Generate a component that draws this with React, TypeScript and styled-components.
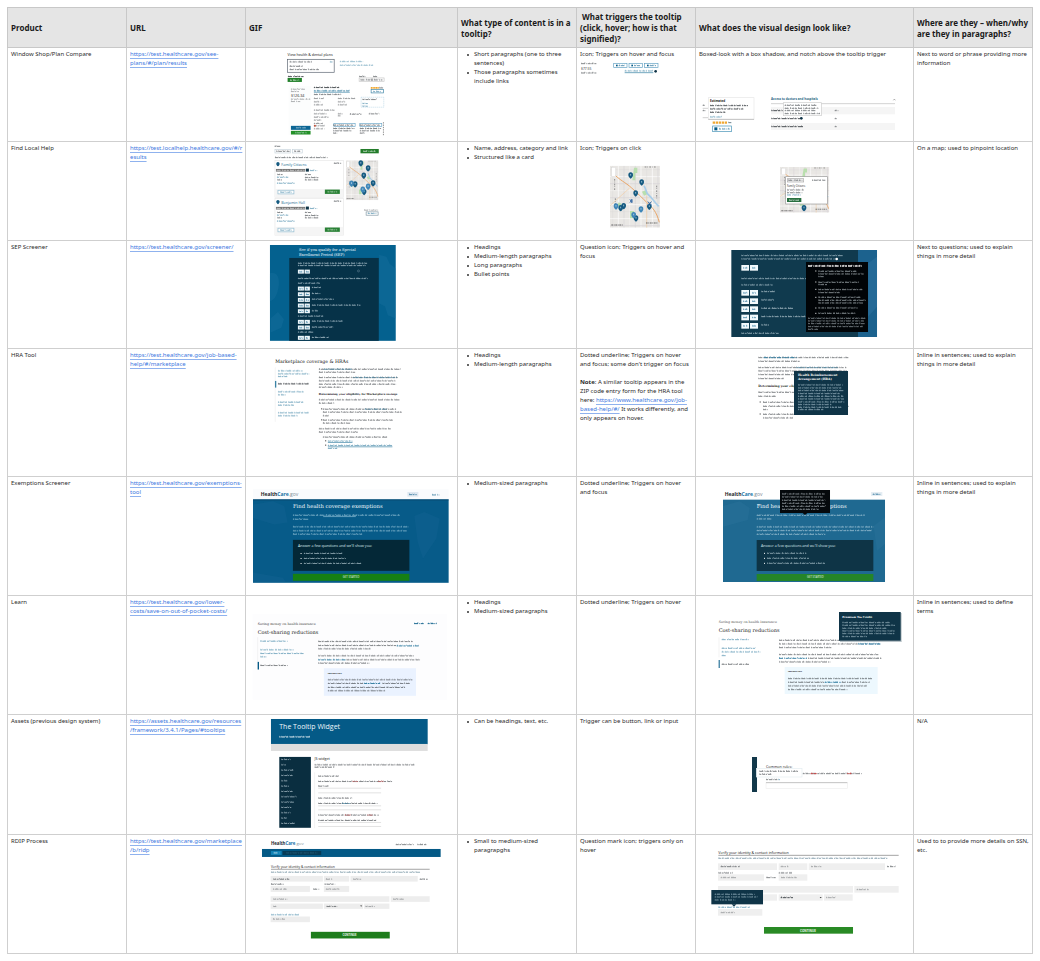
import React from "react";
import styled, { createGlobalStyle } from "styled-components";

const GlobalStyle = createGlobalStyle`
  body {
    margin: 0;
    background: #fff;
    color: #2b2b2b;
    font-family: "Noto Sans", "Open Sans", sans-serif;
  }
`;

const Page = styled.main`
  padding: 7px;
`;

const Table = styled.table`
  width: 100%;
  table-layout: fixed;
  border-collapse: collapse;
  font-size: 6px;
  line-height: 9px;
`;

const Col = styled.col<{ $share: number }>`
  width: ${(p) => p.$share}%;
`;

const HeadCell = styled.th`
  height: 39px;
  padding: 0 2px 0 3px;
  border: 1px solid #c8c8c8;
  background: #e5e5e5;
  color: #1a1a1a;
  font-size: 8px;
  line-height: 11px;
  font-weight: 700;
  text-align: left;
  vertical-align: middle;
`;

const Row = styled.tr<{ $height: number }>`
  height: ${(p) => p.$height}px;
`;

const Cell = styled.td`
  padding: 0;
  border: 1px solid #cfcfcf;
  vertical-align: top;
`;

const Copy = styled.p<{ $spaced?: boolean }>`
  margin: ${(p) => (p.$spaced ? "5px 0 0" : "0")};
  padding: 2px 2px 2px 3px;
`;

const Bullets = styled.ul`
  margin: 0;
  padding: 2px 3px 0 9px;
  list-style: none;
`;

const Bullet = styled.li`
  display: flex;
  gap: 5px;

  &::before {
    content: "";
    flex: none;
    width: 2px;
    height: 2px;
    margin-top: 4px;
    border-radius: 50%;
    background: #333;
  }
`;

const Link = styled.a`
  color: #3c78e0;
  text-decoration: underline;
  text-decoration-color: #8fb2ee;
  text-underline-offset: 2px;
  overflow-wrap: anywhere;
`;

const Drawing = styled.svg`
  display: block;
  width: 100%;
  height: auto;
`;

const Label = styled.text<{ $size: number; $serif?: boolean; $bold?: boolean }>`
  font-family: ${(p) => (p.$serif ? '"DejaVu Serif", serif' : '"Open Sans", sans-serif')};
  font-size: ${(p) => p.$size}px;
  font-weight: ${(p) => (p.$bold ? 700 : 400)};
`;

const NAVY = "#0f3447";
const BLUE = "#045a87";
const GREEN = "#23812b";
const INK = "#3a3f44";
const TEAL = "#3b83a5";
const PALE = "#d6e6ee";

const PATTERNS = ["9 2 5 3 13 3 4 2 7 4", "4 2 11 3 7 4 15 3", "12 4 3 2 8 2 6 3", "6 3 9 2 3 3 14 4"];
const STEMS = ["1 5 1 9 2 6", "2 8 1 4 1 11", "1 7 2 3 1 10", "1 4 1 12 2 7"];

type LineProps = { x: number; y: number; w: number; c?: string; t?: number; o?: number };

/* A run of words too small to read. */
function Words({ x, y, w, c = INK, t = 3, o = 0.62 }: LineProps) {
  return (
    <g stroke={c} opacity={o} fill="none">
      <path d={`M${x} ${y}h${w}`} strokeWidth={t} strokeDasharray={PATTERNS[(x + y) % 4]} />
      <path d={`M${x + 1} ${y - 2}h${w - 2}`} strokeWidth={3} strokeDasharray={STEMS[(x + w) % 4]} />
    </g>
  );
}

function Lines({ x, c, t, o, rows }: { x: number; c?: string; t?: number; o?: number; rows: [number, number][] }) {
  return (
    <>
      {rows.map(([y, w]) => (
        <Words key={y} x={x} y={y} w={w} c={c} t={t} o={o} />
      ))}
    </>
  );
}

type BoxProps = { x: number; y: number; w: number; h: number; f?: string; s?: string };

function Box({ x, y, w, h, f = "#fff", s = "none" }: BoxProps) {
  return <rect x={x} y={y} width={w} height={h} fill={f} stroke={s} strokeWidth={2} />;
}

function Rule({ x, y, w, c = "#bbb" }: { x: number; y: number; w: number; c?: string }) {
  return <path d={`M${x} ${y}h${w}`} stroke={c} strokeWidth={2} />;
}

function Pin({ x, y, light }: { x: number; y: number; light?: boolean }) {
  return (
    <g>
      <path
        d={`M${x} ${y + 10}C${x - 4} ${y + 7} ${x - 7} ${y + 4} ${x - 7} ${y - 1}A7 8 0 0 1 ${x + 7} ${y - 1}C${x + 7} ${y + 4} ${x + 4} ${y + 7} ${x} ${y + 10}Z`}
        fill={light ? "#3f86b8" : "#155a80"}
      />
      <path d={`M${x} ${y - 4}v5`} stroke="#cfe4f0" strokeWidth={2} />
    </g>
  );
}

function MapArt({ x, y, w, h }: { x: number; y: number; w: number; h: number }) {
  const streets = Array.from({ length: 9 }, (_, i) => i);
  return (
    <svg x={x} y={y} width={w} height={h} viewBox="0 0 150 186" preserveAspectRatio="none">
      <rect width="150" height="186" fill="#e9e7e4" />
      {streets.map((i) => (
        <g key={i} stroke={i % 2 ? "#fff" : "#d8d4d8"} strokeWidth={i % 3 ? 2 : 1}>
          <path d={`M${8 + i * 17} 0v186`} />
          <path d={`M0 ${12 + i * 21}h150`} />
        </g>
      ))}
      <path d="M72 6h10v16h-6v22h-9zM60 136h12v22h-12zM26 110l8 4-4 10-8-4zM96 78l10-4 6 12-10 4z" fill="#b9dfae" />
      <path d="M102 60c8 12 4 20 14 28s14 18 30 34" fill="none" stroke="#a9cde8" strokeWidth="5" />
      <path d="M8 22C30 44 46 50 64 66S96 96 112 112 138 134 148 170" fill="none" stroke="#e9a668" strokeWidth="3" />
      <path d="M0 120L60 66M110 186V90" stroke="#f3cfa6" strokeWidth="2" />
      <path d="M14 40v34M16 98v30M140 60v40M104 4h36" stroke="#8d8d8d" strokeWidth="3" strokeDasharray="5 3 2 4" />
      <rect x="5" y="5" width="12" height="27" fill="#fff" stroke="#ccc" />
      <path d="M4 178h36M108 172h34" stroke="#666" strokeWidth="3" strokeDasharray="5 2 3 2" />
    </svg>
  );
}

function Logo({ x, y, size }: { x: number; y: number; size: number }) {
  return (
    <Label x={x} y={y} $size={size} $bold fill="#23282c">
      Health
      <tspan fill="#1571a5">Care</tspan>
      <tspan fill="#7d8c96" fontWeight={400}>.gov</tspan>
    </Label>
  );
}

function YesNo({ x, y }: { x: number; y: number }) {
  return (
    <g>
      <Box x={x} y={y} w={18} h={12} f="#eef6fa" />
      <Box x={x + 20} y={y} w={16} h={12} f="#eef6fa" />
      <Words x={x + 4} y={y + 7} w={11} c={BLUE} />
      <Words x={x + 24} y={y + 7} w={9} c={BLUE} />
    </g>
  );
}

function PlanCompareGif() {
  return (
    <Drawing viewBox="738 144 634 279" aria-hidden="true">
      <Label x={863} y={167} $size={11} fill="#111">View health &amp; dental plans</Label>
      <Box x={863} y={178} w={140} h={39} s="#56606c" />
      <Lines x={869} rows={[[186, 68], [199, 40], [209, 88]]} />
      <Words x={990} y={186} w={8} c={TEAL} />
      <Lines x={1020} c={TEAL} o={0.5} rows={[[185, 70], [196, 100]]} />
      <Words x={864} y={230} w={47} o={0.9} />
      <Box x={863} y={234} w={43} h={12} f={GREEN} />
      <Words x={870} y={241} w={28} c="#fff" />
      <Words x={1078} y={230} w={20} />
      <Words x={1120} y={230} w={16} />
      <Box x={1078} y={234} w={38} h={10} s="#c5c5c5" />
      <Box x={1118} y={234} w={35} h={10} s="#c5c5c5" />
      <Words x={1082} y={240} w={66} />
      <Box x={866} y={258} w={68} h={147} f="#fcfdfd" />
      <Lines x={873} o={0.4} rows={[[268, 42], [275, 24], [298, 58], [305, 28]]} />
      <Label x={873} y={291} $size={11} fill="#222">$126.34</Label>
      <Box x={873} y={378} w={59} h={12} f="#0b6594" />
      <Box x={873} y={393} w={59} h={11} f="#249028" />
      <Words x={888} y={384} w={30} c={PALE} />
      <Words x={886} y={399} w={34} c={PALE} />
      <Words x={942} y={263} w={78} o={0.9} />
      <Words x={942} y={273} w={108} c={TEAL} o={0.9} />
      <Rule x={942} y={277} w={108} c={TEAL} />
      <Words x={942} y={284} w={82} />
      <Lines x={942} o={0.5} rows={[[296, 31], [306, 20], [315, 28], [331, 62], [342, 38], [352, 44], [361, 22], [371, 28], [378, 34], [387, 32]]} />
      <Lines x={1014} o={0.5} rows={[[296, 54], [306, 22], [315, 30], [342, 14], [348, 8]]} />
      <Words x={1050} y={343} w={35} />
      <Words x={1107} y={342} w={32} />
      <path d="M1113 264h24" stroke="#f0a72f" strokeWidth={5} strokeDasharray="4 1" />
      <Words x={1138} y={264} w={14} />
      <Box x={1114} y={269} w={37} h={10} s={TEAL} />
      <Words x={1120} y={275} w={26} c={TEAL} />
      <rect x={1084} y={292} width={68} height={30} fill="none" stroke="#7eb5d5" strokeDasharray="4 2" />
      <Lines x={1088} rows={[[299, 44]]} />
      <Lines x={1088} c={TEAL} rows={[[311, 16], [319, 16]]} />
      <Box x={1002} y={371} w={64} h={9} s="#6aa6c8" />
      <Box x={1080} y={371} w={66} h={9} s="#6aa6c8" />
      <Lines x={1000} rows={[[376, 60], [386, 64], [393, 56], [400, 12]]} />
      <Lines x={1080} rows={[[376, 60], [386, 64], [393, 60], [400, 14]]} />
      <path d="M1151 367v39" stroke="#555" strokeWidth={2} strokeDasharray="4 3" />
      <circle cx={945} cy={378} r={3} fill="#c6513c" />
    </Drawing>
  );
}

function HelpCard({ y, title }: { y: number; title: string }) {
  return (
    <g transform={`translate(0 ${y})`}>
      <Box x={87} y={0} w={206} h={110} s="#e7e7e7" />
      <Box x={88} y={85} w={204} h={25} f="#f5f5f5" />
      <path d="M96 17c-3-2-5-4-5-8a5 5 0 0 1 10 0c0 4-2 6-5 8z" fill="#155a80" />
      <Label x={106} y={15} $size={11} fill="#18678f">{title}</Label>
      <Words x={264} y={8} w={22} />
      <Box x={90} y={25} w={88} h={8} f="#777" />
      <Words x={92} y={30} w={84} c="#e5e5e5" />
      <Words x={192} y={30} w={22} c={TEAL} />
      <Box x={180} y={24} w={9} h={9} f={NAVY} />
      <Lines x={94} rows={[[42, 18], [58, 14]]} />
      <Lines x={93} c={TEAL} rows={[[50, 34], [68, 54]]} />
      <Lines x={177} rows={[[42, 18], [51, 42], [58, 40]]} />
      <Box x={96} y={89} w={48} h={11} s="#8eb9ce" />
      <Words x={103} y={95} w={34} c={TEAL} />
      <Box x={237} y={87} w={45} h={13} f="#288034" />
      <Words x={245} y={94} w={29} c="#e7f5e9" />
    </g>
  );
}

function LocalHelpGif() {
  return (
    <Drawing viewBox="0 6 634 294" aria-hidden="true">
      <Words x={86} y={19} w={17} />
      <Box x={87} y={28} w={47} h={11} s="#c5d2da" />
      <Box x={140} y={28} w={29} h={11} s="#c5d2da" />
      <Words x={91} y={34} w={40} />
      <Words x={145} y={34} w={20} />
      <Words x={87} y={53} w={158} />
      <Box x={344} y={27} w={55} h={13} f="#237c2a" />
      <Words x={352} y={34} w={38} c="#fff" />
      <HelpCard y={62} title="Family Citizens" />
      <HelpCard y={176} title="Benjamin Hall" />
      <MapArt x={300} y={61} w={98} h={120} />
      {[[345, 70], [367, 85], [354, 107], [328, 133], [382, 130], [355, 156]].map(([x, y]) => (
        <Pin key={x} x={x} y={y} />
      ))}
      <Pin x={317} y={131} light />
      <Pin x={367} y={140} light />
      <Pin x={351} y={149} light />
      <Words x={355} y={211} w={42} o={0.4} />
      <Box x={361} y={216} w={36} h={10} s="#8096a2" />
      <Words x={366} y={221} w={27} c={TEAL} />
    </Drawing>
  );
}

function SepGif() {
  return (
    <Drawing viewBox="0 303 634 321" aria-hidden="true">
      <Box x={72} y={315} w={378} h={288} f="#04618f" />
      <path d="M72 400c22-6 30 14 26 40s-12 40-26 44zM400 344l22 6 10 22 18 14v150l-24-10-8-26-18-10zM74 536l22-20 18 22-8 26-32 14z" fill="#1c74a1" opacity="0.35" />
      <Box x={130} y={354} w={269} h={249} f="#063248" />
      <Label x={159} y={334} $size={11} $serif fill="#f2fafd">See if you qualify for a Special</Label>
      <Label x={159} y={347} $size={11} $serif fill="#f2fafd">Enrollment Period (SEP)</Label>
      <Lines x={156} c="#d4e4ec" rows={[[370, 208], [377, 204], [416, 210], [430, 66], [529, 76], [577, 46]]} />
      {[389, 440, 457, 474, 491, 508, 540, 557, 588].map((y) => (
        <YesNo key={y} x={156} y={y} />
      ))}
      <Lines x={198} c="#d4e4ec" rows={[[443, 30], [461, 27], [478, 66], [496, 146], [513, 20], [544, 94], [562, 64], [593, 52]]} />
      <circle cx={338} cy={393} r={3} fill="none" stroke="#9fb7c4" />
    </Drawing>
  );
}

function HraGif() {
  return (
    <Drawing viewBox="0 9 634 381" aria-hidden="true">
      <Label x={88} y={50} $size={14} $serif fill="#111">Marketplace coverage &amp; HRAs</Label>
      <path d="M88 64v164" stroke="#ddd" />
      <Box x={87} y={105} w={4} h={20} f={TEAL} />
      <Lines x={96} c={TEAL} rows={[[75, 74], [84, 94], [92, 28], [138, 78], [147, 26], [169, 76], [178, 48], [201, 92], [210, 60]]} />
      <Words x={96} y={114} w={96} o={0.9} />
      <Lines x={219} rows={[[70, 246], [79, 110], [95, 238], [105, 230], [115, 232], [124, 72]]} />
      <Words x={234} y={70} w={86} c={TEAL} />
      <Words x={322} y={95} w={132} c={TEAL} />
      <Label x={219} y={146} $size={8} $serif $bold fill="#222">Determining your eligibility for Marketplace savings</Label>
      <Lines x={219} rows={[[162, 242], [172, 46], [249, 216], [259, 118]]} />
      <Lines x={231} rows={[[190, 220], [199, 238], [210, 18], [223, 210], [232, 82], [274, 196]]} />
      <Words x={357} y={190} w={70} c={TEAL} />
      <Lines x={246} c={TEAL} rows={[[286, 74], [299, 194], [308, 28]]} />
      <Rule x={246} y={290} w={74} c={TEAL} />
      <Rule x={246} y={303} w={194} c={TEAL} />
      <path d="M226 189h3M226 222h3M238 285h3M238 298h3" stroke="#222" strokeWidth={3} />
    </Drawing>
  );
}

function ExemptionsGif() {
  return (
    <Drawing viewBox="0 393 634 354" aria-hidden="true">
      <Box x={21} y={430} w={588} h={31} f="#fafbfd" />
      <Logo x={44} y={450} size={15} />
      <Box x={485} y={438} w={33} h={14} f="#dfe7f0" />
      <Words x={490} y={446} w={23} c={BLUE} />
      <Words x={559} y={447} w={22} c={BLUE} />
      <Box x={21} y={460} w={588} h={251} f="#075b89" />
      <path d="M21 476l60-10 34 14 10 50-40 6-64-20zM506 510l30-12 46 20-10 60-40 60-16-50zM21 680l90 16 10 15H21z" fill="#256f9f" opacity="0.18" />
      <Rule x={21} y={462} w={588} c="#0a4466" />
      <Label x={141} y={486} $size={16} $serif fill="#f0f9fc">Find health coverage exemptions</Label>
      <Lines x={141} c="#b5d9e8" rows={[[508, 322], [520, 46], [543, 348], [555, 342], [565, 208]]} />
      <Rule x={232} y={512} w={98} c="#93c3d8" />
      <Box x={141} y={582} w={350} h={93} f="#042837" />
      <Label x={156} y={603} $size={11} fill="#dcebf0">Answer a few questions and we'll show you:</Label>
      <Lines x={174} c="#c5d9e0" rows={[[623, 118], [638, 126], [653, 174]]} />
      <path d="M164 623h3M164 638h3M164 653h3" stroke="#fff" strokeWidth={3} />
      <Box x={141} y={684} w={350} h={21} f="#168014" />
      <Label x={291} y={697} $size={8} fill="#e9f7e9">GET STARTED</Label>
    </Drawing>
  );
}

function LearnGif() {
  return (
    <Drawing viewBox="0 6 634 354" aria-hidden="true">
      <Box x={20} y={60} w={584} h={258} f="#fdfdfe" />
      <Label x={35} y={92} $size={10} $serif fill="#444">Saving money on health insurance</Label>
      <Label x={35} y={119} $size={15} $serif fill="#222">Cost-sharing reductions</Label>
      <Words x={505} y={89} w={29} c={BLUE} o={0.9} />
      <Words x={546} y={89} w={28} c={BLUE} o={0.9} />
      <path d="M35 130v96" stroke="#ddd" />
      <Box x={35} y={204} w={4} h={23} f={BLUE} />
      <Lines x={43} c={TEAL} rows={[[142, 82], [168, 100], [179, 130], [189, 20]]} />
      <Words x={43} y={215} w={82} />
      <Lines x={217} rows={[[143, 284], [155, 234], [165, 158], [186, 290], [208, 154]]} />
      <Words x={302} y={198} w={221} />
      <Words x={453} y={156} w={68} c={TEAL} o={1} />
      <Words x={217} y={198} w={82} c={TEAL} o={1} />
      <Box x={234} y={223} w={277} h={83} f="#eaf2ff" />
      <Label x={246} y={240} $size={7} $bold fill="#222">IMPORTANT</Label>
      <Lines x={246} rows={[[258, 254], [269, 106], [281, 232], [291, 172]]} />
      <Words x={410} y={269} w={82} />
      <Words x={355} y={269} w={52} c={TEAL} o={1} />
    </Drawing>
  );
}

function AssetsGif() {
  const menu = [28, 14, 36, 34, 20, 24, 34, 46, 38, 30, 28, 16, 44];
  return (
    <Drawing viewBox="0 363 634 357" aria-hidden="true">
      <Box x={75} y={375} w={471} h={76} f="#045a87" />
      <Box x={75} y={450} w={471} h={21} f="#ddd" />
      <Label x={100} y={406} $size={21} fill="#eef8fc">The Tooltip Widget</Label>
      <Words x={100} y={429} w={92} c="#fff" o={0.9} />
      <Box x={100} y={489} w={95} h={213} f="#0a2e40" />
      {menu.map((w, i) => (
        <Words key={i} x={106} y={497 + i * 16} w={w} c="#cadae2" />
      ))}
      <Label x={206} y={499} $size={11} fill="#222">JS widget</Label>
      <Lines x={206} rows={[[513, 300], [520, 60]]} />
      <path d="M206 535v168" stroke="#ddd" />
      <Lines x={217} rows={[[547, 62], [563, 222], [577, 32], [613, 102], [629, 178], [664, 182], [680, 176]]} />
      <Words x={320} y={563} w={16} c="#c55" />
      <Words x={397} y={563} w={17} c="#c55" />
      <Words x={297} y={664} w={20} c="#c55" />
      <Words x={365} y={664} w={15} c="#c55" />
      <Words x={288} y={629} w={25} c={TEAL} />
      {[583, 597, 636, 648, 686, 698].map((y) => (
        <Rule key={y} x={217} y={y} w={189} c="#d3d3d3" />
      ))}
    </Drawing>
  );
}

/* The name, birth date and address inputs of the identity form. */
function IdentityFields() {
  const grey = "#ededed";
  return (
    <g>
      <Box x={74} y={132} w={157} h={17} f={grey} />
      <Box x={234} y={132} w={76} h={17} f={grey} />
      <Box x={314} y={132} w={202} h={17} f={grey} />
      <Words x={82} y={142} w={50} />
      <Words x={240} y={142} w={21} o={0.4} />
      <Words x={322} y={142} w={24} o={0.4} />
      <Words x={522} y={142} w={24} />
      <Words x={75} y={157} w={38} />
      <Words x={236} y={157} w={32} />
      <Box x={74} y={162} w={118} h={18} f={grey} />
      <Box x={234} y={162} w={76} h={18} f={grey} />
      <Words x={81} y={172} w={41} o={0.4} />
      <Words x={202} y={172} w={18} />
      <Words x={240} y={172} w={42} o={0.4} />
      <Box x={74} y={193} w={357} h={17} f={grey} />
      <Box x={435} y={193} w={117} h={17} f={grey} />
      <Words x={82} y={202} w={42} o={0.4} />
      <Words x={442} y={202} w={32} o={0.4} />
      <Box x={74} y={215} w={157} h={16} f={grey} />
      <Box x={234} y={215} w={118} h={16} f={grey} />
      <Box x={355} y={215} w={76} h={16} f={grey} />
      <Words x={82} y={224} w={9} o={0.4} />
      <Words x={242} y={224} w={32} />
      <path d="M343 221h6l-3 4z" fill="#333" />
      <Words x={359} y={224} w={28} o={0.4} />
      <Words x={75} y={249} w={84} c={TEAL} />
      <Box x={74} y={254} w={118} h={17} f={grey} />
      <Words x={81} y={262} w={36} o={0.4} />
    </g>
  );
}

function RidpGif() {
  return (
    <Drawing viewBox="0 9 634 354" aria-hidden="true">
      <Logo x={75} y={40} size={13} />
      <Words x={450} y={38} w={54} />
      <Words x={515} y={38} w={31} />
      <Box x={48} y={51} w={537} h={24} f="#045985" />
      <Box x={75} y={57} w={32} h={12} f="#1182b5" />
      <Words x={83} y={63} w={17} c="#fff" />
      <Box x={110} y={57} w={116} h={12} f="#073b56" />
      <Words x={121} y={63} w={94} c="#35718c" o={0.5} />
      <Label x={75} y={109} $size={10} fill="#222">Verify your identity &amp; contact information</Label>
      <Rule x={75} y={112} w={477} c="#777" />
      <Words x={75} y={121} w={448} c="#577c90" />
      <IdentityFields />
      <Box x={195} y={300} w={237} h={20} f="#1e7d1c" />
      <Label x={290} y={313} $size={8} $bold fill="#eef8ee">CONTINUE</Label>
    </Drawing>
  );
}

function PlanCompareTrigger() {
  return (
    <Drawing viewBox="0 182 354 40" aria-hidden="true">
      <Words x={12} y={190} w={46} />
      <Label x={12} y={208} $size={10} fill="#222">$77.55</Label>
      <Words x={12} y={218} w={46} />
      {[110, 156, 203].map((x) => (
        <g key={x}>
          <Box x={x} y={189} w={40} h={13} s="#5f9fc2" />
          <Box x={x + 7} y={193} w={5} h={5} f={BLUE} />
          <Words x={x + 15} y={196} w={20} c={BLUE} />
        </g>
      ))}
      <Words x={143} y={212} w={86} c={TEAL} />
      <Rule x={143} y={217} w={86} c="#2d7ba0" />
      <circle cx={236} cy={213} r={4} fill={NAVY} />
    </Drawing>
  );
}

function LocalHelpTrigger() {
  return (
    <Drawing viewBox="0 46 354 220" aria-hidden="true">
      <MapArt x={99} y={78} w={150} h={186} />
      {[[161, 107], [194, 128], [176, 161], [131, 205], [140, 199], [217, 201], [177, 236]].map(([x, y]) => (
        <Pin key={x} x={x} y={y} />
      ))}
      <Pin x={117} y={200} light />
      <Pin x={192} y={209} light />
      <Pin x={170} y={226} light />
      <path d="M158 180l10 8M168 180l-10 8M163 178v12M212 186l12 10M224 186l-12 10" stroke="#3d6ea8" strokeWidth={3} />
    </Drawing>
  );
}

function PlanCompareVisual() {
  return (
    <Drawing viewBox="0 182 651 240" aria-hidden="true">
      <Lines x={20} rows={[[315, 8], [331, 10]]} />
      <Rule x={20} y={324} w={16} />
      <Rule x={20} y={352} w={16} />
      <Box x={37} y={292} w={137} h={65} s="#e6e6e6" />
      <Rule x={37} y={357} w={137} c="#aaa" />
      <Label x={42} y={306} $size={9} $bold fill="#222">Estimated</Label>
      <Lines x={42} o={0.85} rows={[[316, 114], [326, 104], [336, 46]]} />
      <Words x={42} y={350} w={36} c={TEAL} />
      <path d="M50 367h44" stroke="#efa833" strokeWidth={7} strokeDasharray="7 2" />
      <Words x={97} y={367} w={9} c={NAVY} />
      <Box x={50} y={377} w={56} h={17} s="#3f8fb5" />
      <Box x={55} y={381} w={9} h={9} f={BLUE} />
      <Words x={69} y={386} w={32} c={BLUE} />
      <Label x={225} y={300} $size={9} $bold fill="#2a6685">Access to doctors and hospitals</Label>
      <path d="M592 300l3-4 3 4" stroke="#333" fill="none" />
      <Rule x={225} y={310} w={372} c="#bcbcbc" />
      <Box x={225} y={320} w={372} h={22} f="#f5f5f5" />
      <Box x={225} y={368} w={372} h={21} f="#f5f5f5" />
      <Words x={226} y={331} w={34} o={0.9} />
      <Words x={226} y={355} w={86} o={0.9} />
      <circle cx={316} cy={354} r={4} fill={NAVY} />
      <Words x={226} y={379} w={98} o={0.9} />
      <Lines x={416} rows={[[331, 11], [355, 8], [379, 8]]} />
      <Box x={262} y={307} w={114} h={39} s="#ccc" />
      <Lines x={266} rows={[[315, 98], [324, 102], [331, 92], [340, 106]]} />
    </Drawing>
  );
}

function LocalHelpVisual() {
  return (
    <Drawing viewBox="0 6 651 290" aria-hidden="true">
      <MapArt x={252} y={81} w={148} h={137} />
      <Pin x={324} y={204} />
      <Box x={269} y={110} w={125} h={82} s="#999" />
      <Box x={274} y={116} w={49} h={10} f="#f3f3f3" s="#aaa" />
      <Words x={277} y={121} w={42} />
      <Words x={348} y={121} w={40} />
      <Label x={273} y={141} $size={8} fill="#222">Family Citizens</Label>
      <Lines x={273} rows={[[150, 50], [158, 46]]} />
      <Words x={273} y={165} w={42} c={TEAL} />
      <Box x={273} y={174} w={43} h={12} f="#286f40" />
      <Words x={279} y={181} w={30} c="#fff" />
    </Drawing>
  );
}

function SepVisual() {
  return (
    <Drawing viewBox="0 303 651 321" aria-hidden="true">
      <Box x={106} y={330} w={437} h={261} f="#103a4e" />
      <Box x={486} y={330} w={57} h={261} f="#1c628e" />
      <path d="M516 370l27-20v150l-27 30z" fill="#3a7dac" opacity="0.3" />
      <Lines x={136} c="#c9dce5" rows={[[347, 304], [357, 280], [416, 194], [435, 94], [580, 112]]} />
      <circle cx={422} cy={357} r={4} fill="#fff" />
      {[375, 450, 475, 499, 524, 549].map((y) => (
        <g key={y}>
          <Box x={136} y={y} w={23} h={17} f="#f3fafd" />
          <Box x={162} y={y} w={24} h={17} f="#f3fafd" />
          <Words x={141} y={y + 9} w={13} c={BLUE} />
          <Words x={168} y={y + 9} w={12} c={BLUE} />
        </g>
      ))}
      <Lines x={196} c="#dce9ef" rows={[[455, 42], [480, 38], [505, 98], [530, 134], [555, 26]]} />
      <Box x={330} y={366} w={186} h={210} f="#010407" />
      <Words x={336} y={378} w={162} c="#fff" t={4} o={0.9} />
      <Lines x={367} c="#c5cfd4" rows={[[394, 114], [402, 136], [410, 16], [427, 122], [434, 26], [449, 132], [458, 64], [472, 126], [481, 142], [489, 134], [504, 118], [520, 112]]} />
      <Lines x={336} c="#aeb9bf" rows={[[535, 172], [543, 168], [551, 170], [560, 164], [568, 30]]} />
      <path d="M358 393h3M358 426h3M358 448h3M358 472h3M358 504h3M358 520h3" stroke="#fff" strokeWidth={3} />
    </Drawing>
  );
}

function HraVisual() {
  return (
    <Drawing viewBox="0 9 651 381" aria-hidden="true">
      <Lines x={187} rows={[[35, 272], [46, 124], [65, 264], [75, 266], [86, 108], [98, 80], [139, 130], [151, 52]]} />
      <Words x={203} y={35} w={100} c={TEAL} o={1} />
      <Words x={300} y={65} w={128} c={TEAL} />
      <Label x={187} y={122} $size={9} $serif $bold fill="#222">Determining your eligibility</Label>
      <Lines x={201} rows={[[169, 92], [181, 258], [191, 14], [205, 242], [216, 90]]} />
      <path d="M191 168h3M191 204h3" stroke="#222" strokeWidth={3} />
      <Box x={294} y={75} w={162} h={132} f={NAVY} />
      <Label x={306} y={90} $size={9} $serif $bold fill="#fff">Health Reimbursement</Label>
      <Label x={306} y={102} $size={9} $serif $bold fill="#fff">Arrangement (HRA)</Label>
      <Lines x={306} c="#b9d0db" rows={[[117, 134], [126, 130], [134, 138], [143, 126], [151, 136], [159, 138], [168, 140], [176, 102], [184, 130], [191, 76]]} />
    </Drawing>
  );
}

function ExemptionsVisual() {
  return (
    <Drawing viewBox="0 393 651 354" aria-hidden="true">
      <Logo x={86} y={449} size={15} />
      <Box x={525} y={438} w={34} h={12} f="#e5edf3" />
      <Words x={530} y={445} w={24} c={BLUE} />
      <Box x={81} y={461} w={486} h={247} f="#1f6991" />
      <path d="M81 480l50-14 30 20-6 36-74 20zM533 540l34-26v80l-24 20z" fill="#347ba5" opacity="0.25" />
      <Label x={182} y={486} $size={16} $serif fill="#f4fafc">Find health coverage exemptions</Label>
      <Lines x={182} c="#c3dce8" rows={[[508, 324], [519, 44], [543, 350], [554, 346], [565, 206]]} />
      <Box x={182} y={582} w={350} h={93} f="#0e3446" />
      <Label x={195} y={603} $size={11} fill="#dcebf0">Answer a few questions and we'll show you:</Label>
      <Lines x={213} c="#c5d9e0" rows={[[622, 118], [637, 126], [652, 174]]} />
      <path d="M204 622h3M204 637h3M204 652h3" stroke="#fff" strokeWidth={3} />
      <Box x={182} y={684} w={350} h={21} f="#258528" />
      <Label x={333} y={697} $size={8} fill="#e9f7e9">GET STARTED</Label>
      <Box x={252} y={432} w={150} h={69} f="#05090c" />
      <path d="M320 501h14l-7 6z" fill="#05090c" />
      <Lines x={258} c="#c2cbd0" rows={[[444, 128], [453, 122], [463, 130], [472, 128], [481, 132], [490, 110]]} />
    </Drawing>
  );
}

function LearnVisual() {
  return (
    <Drawing viewBox="0 6 651 354" aria-hidden="true">
      <Label x={68} y={88} $size={10} $serif fill="#555">Saving money on health insurance</Label>
      <Label x={68} y={115} $size={15} $serif fill="#222">Cost-sharing reductions</Label>
      <path d="M69 130v60" stroke="#ddd" />
      <Box x={68} y={198} w={3} h={24} f={BLUE} />
      <Lines x={77} c={TEAL} rows={[[137, 82], [163, 102], [174, 116], [185, 14]]} />
      <Words x={77} y={211} w={82} />
      <Lines x={249} rows={[[139, 278], [150, 236], [161, 160], [182, 298], [204, 154]]} />
      <Words x={336} y={193} w={220} />
      <Words x={487} y={150} w={68} c={BLUE} o={1} />
      <Words x={249} y={193} w={84} c={TEAL} o={1} />
      <Box x={266} y={219} w={279} h={81} f="#edf8fe" />
      <Label x={276} y={235} $size={7} $bold fill="#222">IMPORTANT</Label>
      <Lines x={276} rows={[[254, 252], [265, 108], [276, 236], [287, 178]]} />
      <Words x={437} y={265} w={84} />
      <Words x={386} y={265} w={48} c={TEAL} o={1} />
      <Box x={432} y={57} w={185} h={87} f="#b9c3c8" />
      <Box x={429} y={54} w={185} h={86} f={NAVY} />
      <Label x={439} y={72} $size={8} $serif $bold fill="#fff">Premium Tax Credit</Label>
      <Lines x={439} c="#b4cad4" rows={[[86, 142], [94, 158], [103, 136], [111, 158], [119, 156], [128, 74]]} />
    </Drawing>
  );
}

function AssetsVisual() {
  return (
    <Drawing viewBox="0 363 651 354" aria-hidden="true">
      <Box x={168} y={489} w={15} h={105} f="#12384a" />
      <Label x={210} y={522} $size={11} fill="#222">Common rules:</Label>
      <Words x={320} y={539} w={178} />
      <Words x={344} y={539} w={19} c="#c44" o={1} />
      <Words x={454} y={539} w={12} c="#c44" o={1} />
      <Box x={181} y={523} w={137} h={26} s="#e3ecf0" />
      <Lines x={190} rows={[[532, 116], [541, 36]]} />
      <Words x={210} y={557} w={34} />
      <Words x={247} y={557} w={5} c={TEAL} />
      <Box x={210} y={566} w={244} h={17} s="#eee" />
      <Rule x={210} y={566} w={244} c="#aaa" />
    </Drawing>
  );
}

function RidpVisual() {
  const grey = "#efefef";
  return (
    <Drawing viewBox="18 9 651 354" aria-hidden="true">
      <Label x={85} y={66} $size={11} fill="#111">Verify your identity &amp; contact information</Label>
      <Rule x={85} y={70} w={541} c="#777" />
      <Words x={85} y={79} w={508} c="#54788c" />
      <Box x={84} y={94} w={177} h={20} f={grey} />
      <Box x={266} y={94} w={86} h={20} f={grey} />
      <Box x={356} y={94} w={229} h={20} f={grey} />
      <Words x={92} y={104} w={57} />
      <Words x={272} y={104} w={23} o={0.4} />
      <Words x={363} y={104} w={31} o={0.4} />
      <Words x={591} y={104} w={27} />
      <Words x={85} y={123} w={43} />
      <Words x={266} y={123} w={40} />
      <Box x={84} y={127} w={138} h={19} f={grey} />
      <Box x={266} y={127} w={86} h={19} f={grey} />
      <Words x={92} y={137} w={46} o={0.4} />
      <Words x={229} y={137} w={28} />
      <Words x={273} y={137} w={47} o={0.4} />
      <Box x={84} y={162} w={405} h={20} f={grey} />
      <Box x={493} y={162} w={133} h={20} f={grey} />
      <Words x={500} y={173} w={36} o={0.4} />
      <Box x={84} y={187} w={177} h={19} f={grey} />
      <Box x={266} y={187} w={132} h={19} f={grey} />
      <Box x={402} y={187} w={86} h={19} f={grey} />
      <Words x={272} y={197} w={37} o={0.9} />
      <path d="M389 195h6l-3 4z" fill="#333" />
      <Words x={408} y={197} w={31} o={0.4} />
      <Words x={85} y={226} w={96} c={TEAL} />
      <Box x={84} y={231} w={133} h={20} f={grey} />
      <Words x={92} y={242} w={42} o={0.4} />
      <Box x={64} y={174} w={155} h={43} f={NAVY} />
      <path d="M125 217h14l-7 7z" fill={NAVY} />
      <Lines x={74} c="#a8c2ce" rows={[[187, 120], [195, 130], [204, 62]]} />
      <Box x={222} y={285} w={267} h={20} f="#298a25" />
      <Label x={330} y={299} $size={9} $bold fill="#eef8ee">CONTINUE</Label>
    </Drawing>
  );
}

type Entry = {
  product: string;
  url: string;
  height: number;
  gif: React.ReactNode;
  content: string[];
  trigger: React.ReactNode;
  visual: React.ReactNode;
  where: string;
};

const entries: Entry[] = [
  {
    product: "Window Shop/Plan Compare",
    url: "https://test.healthcare.gov/see-plans/#/plan/results",
    height: 94,
    gif: <PlanCompareGif />,
    content: ["Short paragraphs (one to three sentences)", "Those paragraphs sometimes include links"],
    trigger: (
      <>
        <Copy>Icon; Triggers on hover and focus</Copy>
        <PlanCompareTrigger />
      </>
    ),
    visual: (
      <>
        <Copy>Boxed-look with a box shadow, and notch above the tooltip trigger</Copy>
        <PlanCompareVisual />
      </>
    ),
    where: "Next to word or phrase providing more information",
  },
  {
    product: "Find Local Help",
    url: "https://test.localhelp.healthcare.gov/#/results",
    height: 99,
    gif: <LocalHelpGif />,
    content: ["Name, address, category and link", "Structured like a card"],
    trigger: (
      <>
        <Copy>Icon; Triggers on click</Copy>
        <LocalHelpTrigger />
      </>
    ),
    visual: <LocalHelpVisual />,
    where: "On a map; used to pinpoint location",
  },
  {
    product: "SEP Screener",
    url: "https://test.healthcare.gov/screener/",
    height: 108,
    gif: <SepGif />,
    content: ["Headings", "Medium-length paragraphs", "Long paragraphs", "Bullet points"],
    trigger: <Copy>Question icon; Triggers on hover and focus</Copy>,
    visual: <SepVisual />,
    where: "Next to questions; used to explain things in more detail",
  },
  {
    product: "HRA Tool",
    url: "https://test.healthcare.gov/job-based-help/#/marketplace",
    height: 128,
    gif: <HraGif />,
    content: ["Headings", "Medium-length paragraphs"],
    trigger: (
      <>
        <Copy>Dotted underline; Triggers on hover and focus; some don't trigger on focus</Copy>
        <Copy $spaced>
          <b>Note</b>: A similar tooltip appears in the ZIP code entry form for the HRA tool here:{" "}
          <Link href="https://www.healthcare.gov/job-based-help/#/">https://www.healthcare.gov/job-based-help/#/</Link>{" "}
          It works differently, and only appears on hover.
        </Copy>
      </>
    ),
    visual: <HraVisual />,
    where: "Inline in sentences; used to explain things in more detail",
  },
  {
    product: "Exemptions Screener",
    url: "https://test.healthcare.gov/exemptions-tool",
    height: 119,
    gif: <ExemptionsGif />,
    content: ["Medium-sized paragraphs"],
    trigger: <Copy>Dotted underline; Triggers on hover and focus</Copy>,
    visual: <ExemptionsVisual />,
    where: "Inline in sentences; used to explain things in more detail",
  },
  {
    product: "Learn",
    url: "https://test.healthcare.gov/lower-costs/save-on-out-of-pocket-costs/",
    height: 119,
    gif: <LearnGif />,
    content: ["Headings", "Medium-sized paragraphs"],
    trigger: <Copy>Dotted underline; Triggers on hover</Copy>,
    visual: <LearnVisual />,
    where: "Inline in sentences; used to define terms",
  },
  {
    product: "Assets (previous design system)",
    url: "https://assets.healthcare.gov/resources/framework/3.4.1/Pages/#tooltips",
    height: 120,
    gif: <AssetsGif />,
    content: ["Can be headings, text, etc."],
    trigger: <Copy>Trigger can be button, link or input</Copy>,
    visual: <AssetsVisual />,
    where: "N/A",
  },
  {
    product: "RDIP Process",
    url: "https://test.healthcare.gov/marketplace/b/ridp",
    height: 119,
    gif: <RidpGif />,
    content: ["Small to medium-sized paragrapghs"],
    trigger: <Copy>Question mark icon; triggers only on hover</Copy>,
    visual: <RidpVisual />,
    where: "Used to to provide more details on SSN, etc.",
  },
];

const shares = [11.61, 11.61, 20.68, 11.61, 11.61, 21.27, 11.61];

export default function App() {
  return (
    <Page>
      <GlobalStyle />
      <Table>
        <colgroup>
          {shares.map((share, i) => (
            <Col key={i} $share={share} />
          ))}
        </colgroup>
        <thead>
          <tr>
            <HeadCell scope="col">Product</HeadCell>
            <HeadCell scope="col">URL</HeadCell>
            <HeadCell scope="col">GIF</HeadCell>
            <HeadCell scope="col">What type of content is in a tooltip?</HeadCell>
            <HeadCell scope="col">&nbsp;What triggers the tooltip (click, hover; how is that signified)?</HeadCell>
            <HeadCell scope="col">What does the visual design look like?</HeadCell>
            <HeadCell scope="col">Where are they – when/why are they in paragraphs?</HeadCell>
          </tr>
        </thead>
        <tbody>
          {entries.map((entry) => (
            <Row key={entry.product} $height={entry.height}>
              <Cell>
                <Copy>{entry.product}</Copy>
              </Cell>
              <Cell>
                <Copy>
                  <Link href={entry.url}>{entry.url}</Link>
                </Copy>
              </Cell>
              <Cell>{entry.gif}</Cell>
              <Cell>
                <Bullets>
                  {entry.content.map((item) => (
                    <Bullet key={item}>{item}</Bullet>
                  ))}
                </Bullets>
              </Cell>
              <Cell>{entry.trigger}</Cell>
              <Cell>{entry.visual}</Cell>
              <Cell>
                <Copy>{entry.where}</Copy>
              </Cell>
            </Row>
          ))}
        </tbody>
      </Table>
    </Page>
  );
}
